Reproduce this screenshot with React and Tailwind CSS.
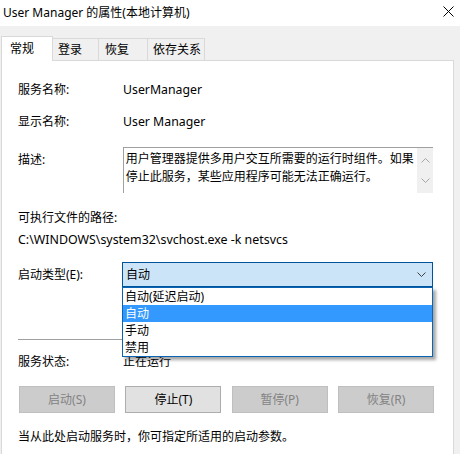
import React from "react";

const FONT = { fontFamily: '"Noto Sans", "Noto Sans CJK SC", sans-serif' };

function Chevron({ className }) {
  return (
    <svg width="9" height="6" viewBox="0 0 9 6" className={className}>
      <path d="M0.5 0.5 L4.5 4.5 L8.5 0.5" fill="none" stroke="currentColor" strokeWidth="1" />
    </svg>
  );
}

function Btn({ label, disabled }) {
  return (
    <div
      className={
        "w-[96px] h-[27px] flex items-center justify-center border text-[12px] " +
        (disabled
          ? "bg-[#cccccc] border-[#bfbfbf] text-[#838383]"
          : "bg-[#e1e1e1] border-[#adadad] text-black")
      }
    >
      {label}
    </div>
  );
}

export default function App() {
  return (
    <div className="w-[460px] h-[454px] bg-white overflow-hidden flex flex-col text-[12px] text-black leading-none" style={FONT}>
      {/* Title bar */}
      <div className="h-[26px] flex items-center justify-between pl-[3px] pr-[6px] bg-white shrink-0">
        <span className="text-[12px]">User Manager 的属性(本地计算机)</span>
        <svg width="11" height="11" viewBox="0 0 11 11" className="mt-[-4px]">
          <path d="M0.5 0.5 L10.5 10.5 M10.5 0.5 L0.5 10.5" stroke="#000" strokeWidth="1" />
        </svg>
      </div>

      {/* Body */}
      <div className="flex-1 bg-[#f0f0f0] flex flex-col pl-[1px] pr-[6px]">
        {/* Tabs */}
        <div className="h-[10px] shrink-0" />
        <div className="flex items-end h-[24px] shrink-0 relative z-10">
          <div className="w-[52px] h-[25px] bg-white border border-b-0 border-[#d9d9d9] flex items-center pl-[8px] -mb-px relative">
            常规
          </div>
          <div className="w-[46px] h-[22px] border-t border-r border-[#d9d9d9] flex items-center pl-[5px]">登录</div>
          <div className="w-[49px] h-[22px] border-t border-r border-[#d9d9d9] flex items-center pl-[6px]">恢复</div>
          <div className="w-[57px] h-[22px] border-t border-r border-[#d9d9d9] flex items-center pl-[5px]">依存关系</div>
        </div>

        {/* Panel */}
        <div className="flex-1 bg-white border border-b-0 border-[#d9d9d9] relative pl-[16px] pr-[20px]">
          <div className="flex items-center h-[16px] mt-[21px]">
            <span className="w-[105px]">服务名称:</span>
            <span className="text-[12.3px]">UserManager</span>
          </div>
          <div className="flex items-center h-[16px] mt-[16px]">
            <span className="w-[105px]">显示名称:</span>
            <span className="text-[12.3px]">User Manager</span>
          </div>
          <div className="flex mt-[17px]">
            <span className="w-[105px] pt-[7px]">描述:</span>
            <div className="w-[311px] h-[46px] border-t border-l border-[#a0a0a0] flex">
              <div className="flex-1 pl-[2px] pt-[2px] leading-[18px]">
                用户管理器提供多用户交互所需要的运行时组件。如果停止此服务，某些应用程序可能无法正确运行。
              </div>
              <div className="w-[16px] bg-[#f0f0f0] flex flex-col items-center justify-between py-[9px] text-[#a6a6a6]">
                <Chevron className="rotate-180" />
                <Chevron />
              </div>
            </div>
          </div>
          <div className="mt-[17px] h-[16px] flex items-center">可执行文件的路径:</div>
          <div className="mt-[6px] h-[16px] flex items-center text-[12.4px]">C:\WINDOWS\system32\svchost.exe -k netsvcs</div>
          <div className="flex items-center mt-[14px]">
            <span className="w-[105px]">启动类型(E):</span>
            <div className="relative">
              <div className="w-[311px] h-[25px] bg-[#cce4f7] border border-[#005499] flex items-center justify-between pl-[3px] pr-[6px]">
                <span>自动</span>
                <Chevron className="text-[#404040]" />
              </div>
              <div className="absolute left-0 top-[25px] w-[311px] bg-white border border-[#0a64b4] shadow-[3px_3px_3px_rgba(0,0,0,0.35)] z-20 flex flex-col">
                <div className="h-[17px] flex items-center pl-[2px]">自动(延迟启动)</div>
                <div className="h-[17px] flex items-center pl-[2px] bg-[#3399ff] text-white">自动</div>
                <div className="h-[17px] flex items-center pl-[2px]">手动</div>
                <div className="h-[17px] flex items-center pl-[2px]">禁用</div>
              </div>
            </div>
          </div>
          <div className="mt-[52px] h-px bg-[#a0a0a0] w-[410px]" />
          <div className="flex items-center h-[16px] mt-[14px]">
            <span className="w-[105px]">服务状态:</span>
            <span>正在运行</span>
          </div>
          <div className="flex justify-between w-[416px] mt-[16px] pl-[1px]">
            <Btn label="启动(S)" disabled />
            <Btn label="停止(T)" />
            <Btn label="暂停(P)" disabled />
            <Btn label="恢复(R)" disabled />
          </div>
          <div className="mt-[16px] h-[16px] flex items-center">当从此处启动服务时，你可指定所适用的启动参数。</div>
        </div>
      </div>
    </div>
  );
}
